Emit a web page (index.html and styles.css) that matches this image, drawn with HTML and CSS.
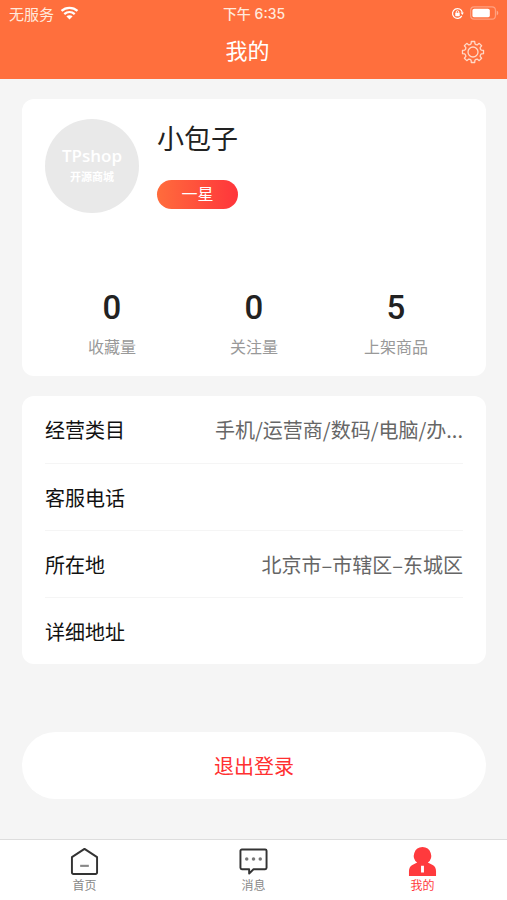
FILE: index.html
```html
<!DOCTYPE html>
<html lang="zh-CN">
<head>
<meta charset="utf-8">
<meta name="viewport" content="width=device-width, initial-scale=1">
<title>我的</title>
<link rel="stylesheet" href="styles.css">
</head>
<body>
<header class="header">
  <div class="status">
    <div class="status-left">
      <span>无服务</span>
      <svg class="wifi" viewBox="0 0 20 14" aria-hidden="true">
        <path d="M1.6 4.8C6.3.4 13.7.4 18.4 4.8M4.5 8.1c3.2-2.8 7.800-2.800 11 0" fill="none" stroke="currentColor" stroke-width="2.400"/>
        <path d="M10 13.800 6.700 10.500c1.900-1.600 4.700-1.600 6.600 0z" fill="currentColor"/>
      </svg>
    </div>
    <time class="clock">下午 6:35</time>
    <div class="status-right">
      <svg class="lock" viewBox="0 0 14 14" aria-hidden="true">
        <path d="M11.600 9.600A5.300 5.300 0 1 1 12.200 6" fill="none" stroke="currentColor" stroke-width="1.300"/>
        <path d="M10.300 6h3.500l-1.600 2.500z" fill="currentColor"/>
        <rect x="4.600" y="6.300" width="4.800" height="3.700" rx=".5" fill="currentColor"/>
        <path d="M5.600 6.500V5.400a1.400 1.400 0 0 1 2.800 0v1.100" fill="none" stroke="currentColor"/>
      </svg>
      <svg class="battery" viewBox="0 0 30 14" aria-hidden="true">
        <rect x=".7" y=".7" width="25.600" height="12.600" rx="3.500" fill="none" stroke="currentColor" stroke-opacity=".35" stroke-width="1.200"/>
        <rect x="2.500" y="2.500" width="18" height="9" rx="2" fill="currentColor"/>
        <path d="M27.600 4.500c2.200.8 2.200 4.200 0 5z" fill="currentColor" fill-opacity=".4"/>
      </svg>
    </div>
  </div>
  <div class="titlebar">
    <h1 class="title">我的</h1>
    <button class="settings" type="button" aria-label="设置">
      <svg viewBox="-12 -12 24 24" aria-hidden="true">
        <path d="M-1.700-10.500H1.700L1.900-8.200Q3-7 4.450-7.140L6.220-8.630 8.630-6.220 7.140-4.450Q7-3 8.200-1.900L10.500-1.700V1.700L8.200 1.900Q7 3 7.140 4.450L8.630 6.220 6.220 8.630 4.450 7.140Q3 7 1.900 8.200L1.700 10.500H-1.700L-1.900 8.200Q-3 7-4.450 7.140L-6.220 8.630-8.630 6.220-7.140 4.450Q-7 3-8.200 1.900L-10.500 1.700V-1.700L-8.200-1.900Q-7-3-7.140-4.450L-8.630-6.220-6.220-8.630-4.450-7.140Q-3-7-1.900-8.200Z"/>
        <circle r="5"/>
      </svg>
    </button>
  </div>
</header>

<main class="main">
  <section class="card profile">
    <div class="person">
      <div class="avatar"><span class="avatar-name">TPshop</span><span class="avatar-sub">开源商城</span></div>
      <div class="identity">
        <h2 class="name">小包子</h2>
        <span class="level">一星</span>
      </div>
    </div>
    <dl class="stats">
      <div class="stat"><dt>收藏量</dt><dd>0</dd></div>
      <div class="stat"><dt>关注量</dt><dd>0</dd></div>
      <div class="stat"><dt>上架商品</dt><dd>5</dd></div>
    </dl>
  </section>

  <dl class="card details">
    <div class="row"><dt>经营类目</dt><dd>手机/运营商/数码/电脑/办...</dd></div>
    <div class="row"><dt>客服电话</dt><dd></dd></div>
    <div class="row"><dt>所在地</dt><dd>北京市–市辖区–东城区</dd></div>
    <div class="row"><dt>详细地址</dt><dd></dd></div>
  </dl>

  <button class="logout" type="button">退出登录</button>
</main>

<nav class="tabs">
  <a class="tab" href="#home">
    <svg viewBox="0 0 30 30" aria-hidden="true">
      <path d="M15 2 28 10.500v16a1.500 1.500 0 0 1-1.500 1.500h-23A1.500 1.500 0 0 1 2 26.500v-16z" fill="none" stroke="#333" stroke-width="2" stroke-linejoin="round"/>
      <path d="M10.500 19.500h9" stroke="#888" stroke-width="2.200"/>
    </svg>
    <span>首页</span>
  </a>
  <a class="tab" href="#messages">
    <svg viewBox="0 0 30 30" aria-hidden="true">
      <path d="M3 2.500h24a1.500 1.500 0 0 1 1.500 1.500v17.500a1.500 1.500 0 0 1-1.500 1.500H15l-4.500 4.500V23H3a1.500 1.500 0 0 1-1.500-1.500V4A1.500 1.500 0 0 1 3 2.500z" fill="none" stroke="#333" stroke-width="2" stroke-linejoin="round"/>
      <g fill="#777"><circle cx="8" cy="12.500" r="1.800"/><circle cx="15" cy="12.500" r="1.800"/><circle cx="22" cy="12.500" r="1.800"/></g>
    </svg>
    <span>消息</span>
  </a>
  <a class="tab active" href="#mine" aria-current="page">
    <svg viewBox="0 0 30 30" aria-hidden="true">
      <path fill-rule="evenodd" d="M15 0a9 9 0 0 0-5.500 16.100L4.500 18.500Q1 20.500 1 25v5h28v-5q0-4.500-3.500-6.500l-5-2.400A9 9 0 0 0 15 0zM13.500 19.500h3v7h-3z" fill="currentColor"/>
    </svg>
    <span>我的</span>
  </a>
</nav>
</body>
</html>
```
FILE: styles.css
```css
* {
  box-sizing: border-box;
}

body {
  margin: 0;
  min-height: 100vh;
  display: flex;
  flex-direction: column;
  background: #f5f5f5;
  color: #222;
  font-family: "Liberation Sans", "Noto Sans CJK SC", sans-serif;
}

h1, h2, dl, dd {
  margin: 0;
  font-weight: 400;
}

button {
  border: 0;
  padding: 0;
  font: inherit;
  cursor: pointer;
}

.header {
  background: #ff6f3d;
  color: #fff;
}

.status {
  display: grid;
  grid-template-columns: 1fr auto 1fr;
  align-items: center;
  height: 26px;
  padding: 0 8px 0 9px;
  font-size: 15px;
  color: #ffe9dc;
}

.status-left,
.status-right {
  display: flex;
  align-items: center;
  gap: 6px;
}

.status-right {
  justify-content: flex-end;
  color: #fff;
}

.wifi {
  width: 19px;
  height: 14px;
  color: #fff;
}

.clock {
  font-family: Inter, "Noto Sans CJK SC", sans-serif;
  font-size: 14px;
  font-weight: 500;
}

.lock {
  width: 13px;
  height: 13px;
}

.battery {
  width: 29px;
  height: 14px;
}

.titlebar {
  display: grid;
  grid-template-columns: 1fr auto 1fr;
  align-items: center;
  height: 53px;
  padding: 0 22px 2px 10px;
}

.title {
  grid-column: 2;
  font-size: 22px;
  line-height: 48px;
}

.settings {
  justify-self: end;
  width: 24px;
  height: 24px;
  background: none;
}

.settings svg {
  display: block;
  fill: none;
  stroke: #ffd9c8;
  stroke-width: 1.3;
  stroke-linejoin: round;
}

.main {
  flex: 1;
  padding: 20px 21px 40px 22px;
}

.card {
  background: #fff;
  border-radius: 12px;
}

.profile {
  padding: 20px 23px 16px;
}

.person {
  display: flex;
  gap: 18px;
}

.avatar {
  display: flex;
  flex-direction: column;
  align-items: center;
  width: 94px;
  height: 94px;
  padding-top: 26px;
  border-radius: 50%;
  background: #e9e9e9;
  color: #fff;
}

.avatar-name {
  font-family: "Open Sans", sans-serif;
  font-size: 17px;
  font-weight: 600;
  line-height: 22px;
}

.avatar-sub {
  font-size: 11px;
  font-weight: 700;
  line-height: 20px;
}

.identity {
  display: flex;
  flex-direction: column;
  align-items: flex-start;
  gap: 19px;
}

.name {
  font-size: 27px;
  line-height: 42px;
}

.level {
  width: 81px;
  border-radius: 15px;
  background: linear-gradient(90deg, #ff6c3c, #ff353b);
  color: #fff;
  font-size: 16px;
  line-height: 29px;
  text-align: center;
}

.stats {
  display: grid;
  grid-template-columns: repeat(3, 1fr);
  margin: 75px -4px 0;
}

.stat {
  display: flex;
  flex-direction: column-reverse;
  gap: 8px;
  text-align: center;
}

.stat dt {
  color: #999;
  font-size: 16px;
  line-height: 24px;
}

.stat dd {
  font-family: Roboto, sans-serif;
  font-size: 33px;
  font-weight: 500;
  line-height: 40px;
}

.details {
  margin-top: 20px;
  padding: 0 23px;
}

.row {
  display: flex;
  align-items: center;
  justify-content: space-between;
  gap: 16px;
  min-height: 67px;
  font-size: 20px;
}

.row + .row {
  border-top: 1px solid #f5f5f5;
}

.row dt {
  color: #111;
}

.row dd {
  color: #666;
  font-family: "Noto Sans CJK SC", sans-serif;
}

.logout {
  display: block;
  width: 100%;
  height: 67px;
  margin-top: 68px;
  border-radius: 34px;
  background: #fff;
  color: #ff3030;
  font-size: 20px;
}

.tabs {
  display: grid;
  grid-template-columns: repeat(3, 1fr);
  height: 61px;
  border-top: 1px solid #ddd;
  background: #fff;
}

.tab {
  display: flex;
  flex-direction: column;
  align-items: center;
  gap: 1px;
  padding-top: 7px;
  color: #888;
  font-size: 12px;
  line-height: 18px;
  text-decoration: none;
}

.tab svg {
  width: 29px;
  height: 29px;
}

.active {
  color: #ff3a3d;
}
```
